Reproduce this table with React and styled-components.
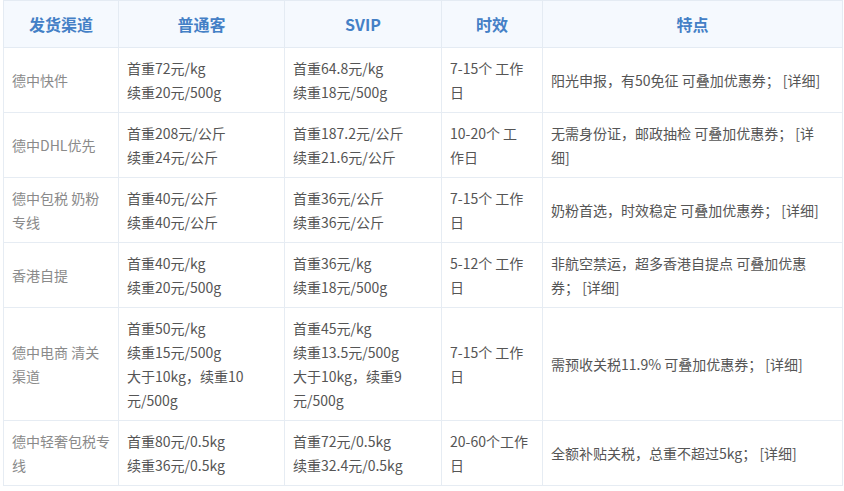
import React from "react";
import styled, { createGlobalStyle } from "styled-components";

const Global = createGlobalStyle`
  html, body { margin: 0; padding: 0; background: #fff; }
  body { font-family: "Noto Sans CJK SC", "Noto Sans", sans-serif; }
`;

const Wrap = styled.div`
  padding: 0 3px 0 3px;
`;

const Table = styled.table`
  border-collapse: collapse;
  width: 839px;
  table-layout: fixed;
  font-size: 14px;
  line-height: 24px;
  color: #555;
`;

const Th = styled.th`
  height: 46px;
  padding: 0;
  background: #f5f9fe;
  border: 1px solid #e4ebf3;
  color: #4480c6;
  font-size: 16px;
  font-weight: bold;
  text-align: center;
  vertical-align: middle;
`;

const Td = styled.td`
  padding: 8px 8px;
  border: 1px solid #e6ecf3;
  vertical-align: middle;
  white-space: nowrap;
  color: ${(p) => (p.$muted ? "#8a8a8a" : "#555")};
`;

const cols = [115, 166, 157, 101, 300];

const rows = [
  {
    name: ["德中快件"],
    normal: ["首重72元/kg", "续重20元/500g"],
    svip: ["首重64.8元/kg", "续重18元/500g"],
    time: ["7-15个 工作", "日"],
    feat: ["阳光申报，有50免征 可叠加优惠券； [详细]"],
  },
  {
    name: ["德中DHL优先"],
    normal: ["首重208元/公斤", "续重24元/公斤"],
    svip: ["首重187.2元/公斤", "续重21.6元/公斤"],
    time: ["10-20个 工", "作日"],
    feat: ["无需身份证，邮政抽检 可叠加优惠券； [详", "细]"],
  },
  {
    name: ["德中包税 奶粉", "专线"],
    normal: ["首重40元/公斤", "续重40元/公斤"],
    svip: ["首重36元/公斤", "续重36元/公斤"],
    time: ["7-15个 工作", "日"],
    feat: ["奶粉首选，时效稳定 可叠加优惠券； [详细]"],
  },
  {
    name: ["香港自提"],
    normal: ["首重40元/kg", "续重20元/500g"],
    svip: ["首重36元/kg", "续重18元/500g"],
    time: ["5-12个 工作", "日"],
    feat: ["非航空禁运，超多香港自提点 可叠加优惠", "券； [详细]"],
  },
  {
    name: ["德中电商 清关", "渠道"],
    normal: ["首重50元/kg", "续重15元/500g", "大于10kg，续重10", "元/500g"],
    svip: ["首重45元/kg", "续重13.5元/500g", "大于10kg，续重9", "元/500g"],
    time: ["7-15个 工作", "日"],
    feat: ["需预收关税11.9% 可叠加优惠券； [详细]"],
  },
  {
    name: ["德中轻奢包税专", "线"],
    normal: ["首重80元/0.5kg", "续重36元/0.5kg"],
    svip: ["首重72元/0.5kg", "续重32.4元/0.5kg"],
    time: ["20-60个工作", "日"],
    feat: ["全额补贴关税，总重不超过5kg； [详细]"],
  },
];

const Lines = ({ lines }) =>
  lines.map((l, i) => (
    <React.Fragment key={i}>
      {i > 0 && <br />}
      {l}
    </React.Fragment>
  ));

export default function App() {
  return (
    <Wrap>
      <Global />
      <Table>
        <colgroup>
          {cols.map((w, i) => (
            <col key={i} style={{ width: w }} />
          ))}
        </colgroup>
        <thead>
          <tr>
            <Th>发货渠道</Th>
            <Th>普通客</Th>
            <Th>SVIP</Th>
            <Th>时效</Th>
            <Th>特点</Th>
          </tr>
        </thead>
        <tbody>
          {rows.map((r, i) => (
            <tr key={i}>
              <Td $muted><Lines lines={r.name} /></Td>
              <Td><Lines lines={r.normal} /></Td>
              <Td><Lines lines={r.svip} /></Td>
              <Td><Lines lines={r.time} /></Td>
              <Td><Lines lines={r.feat} /></Td>
            </tr>
          ))}
        </tbody>
      </Table>
    </Wrap>
  );
}
